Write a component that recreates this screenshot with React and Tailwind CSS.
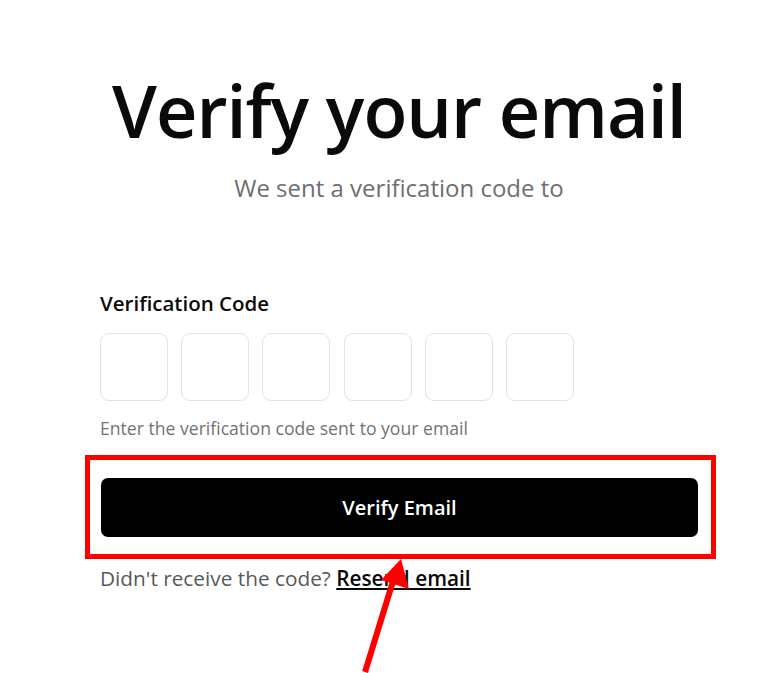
import React from "react";

const font = { fontFamily: '"Open Sans", "Noto Sans", sans-serif' };

const VerifyEmail = () => {
    const slots = [0, 1, 2, 3, 4, 5];

    return (
        <div className="relative w-[784px] h-[673px] bg-white overflow-hidden" style={font}>
            <div className="ml-[100px] w-[598px] pt-[66px] flex flex-col">
                <h1 className="text-center whitespace-nowrap text-[72px] leading-[88px] font-semibold text-[#0a0a0a] tracking-[-1px]">
                    Verify your email
                </h1>
                <p className="text-center text-[24px] leading-[32px] text-[#6e6e73] mt-[18px]">
                    We sent a verification code to
                </p>

                <label className="mt-[85px] text-[20.5px] leading-[28px] font-semibold text-[#0a0a0a]">
                    Verification Code
                </label>
                <div className="mt-[16px] flex gap-[13.2px]">
                    {slots.map((i) => (
                        <div key={i} className="w-[68px] h-[68px] rounded-[9px] border border-[#e2e2e2] bg-white" />
                    ))}
                </div>
                <p className="mt-[15px] text-[17.6px] leading-[24px] text-[#737373]">
                    Enter the verification code sent to your email
                </p>

                {/* annotation box round the button */}
                <div className="mt-[15px] -ml-[15px] -mr-[18px] border-[5px] border-[#ff0000] pl-[11px] pr-[13px] pt-[18px] pb-[17px]">
                    <button className="w-full h-[59px] rounded-[7px] bg-black text-white text-[20px] font-semibold">
                        Verify Email
                    </button>
                </div>

                <p className="mt-[5px] text-[20.8px] leading-[28px] text-[#595959]">
                    Didn't receive the code?{" "}
                    <a className="font-semibold text-[#0a0a0a] underline underline-offset-2">Resend email</a>
                </p>
            </div>

            {/* red arrow pointing at the button */}
            <svg className="absolute left-0 top-0 pointer-events-none" width="784" height="673">
                <line x1="365" y1="672" x2="394" y2="578" stroke="#ff0000" strokeWidth="6" />
                <polygon points="401,559 381,580 409,589" fill="#ff0000" />
            </svg>
        </div>
    );
};

export default function App() {
    return <VerifyEmail />;
}
